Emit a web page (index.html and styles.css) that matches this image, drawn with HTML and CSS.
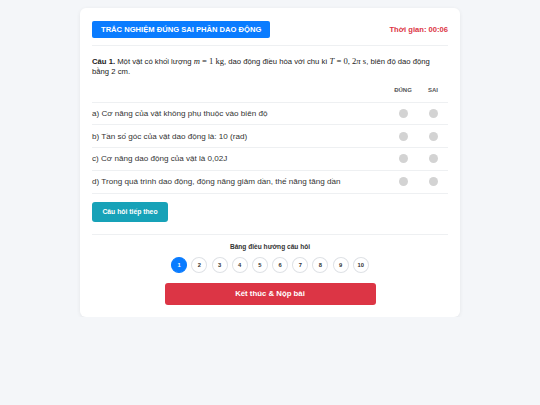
FILE: index.html
```html
<!DOCTYPE html>
<html lang="vi">
<head>
<meta charset="utf-8">
<title>Trắc nghiệm đúng sai</title>
<link rel="stylesheet" href="styles.css">
</head>
<body>
<div class="page">
  <div class="card">
    <div class="header">
      <div class="title">TRẮC NGHIỆM ĐÚNG SAI PHẦN DAO ĐỘNG</div>
      <div class="timer">Thời gian: 00:06</div>
    </div>
    <p class="question"><b class="label">Câu 1.</b> <span>Một vật có khối lượng</span> <span class="math"><i>m</i> = 1 kg</span><span>, dao động điều hòa với chu kì</span> <span class="math"><i>T</i> = 0, 2<i>π</i> s</span><span>, biên độ dao động</span> <span>bằng 2 cm.</span></p>
    <div class="table">
      <div class="row head">
        <div class="cell-text"></div>
        <div class="cell-col">ĐÚNG</div>
        <div class="cell-col">SAI</div>
      </div>
      <div class="row">
        <div class="cell-text">a) Cơ năng của vật không phụ thuộc vào biên độ</div>
        <div class="cell-col"><span class="radio"></span></div>
        <div class="cell-col"><span class="radio"></span></div>
      </div>
      <div class="row">
        <div class="cell-text">b) Tần số góc của vật dao động là: 10 (rad)</div>
        <div class="cell-col"><span class="radio"></span></div>
        <div class="cell-col"><span class="radio"></span></div>
      </div>
      <div class="row">
        <div class="cell-text">c) Cơ năng dao động của vật là 0,02J</div>
        <div class="cell-col"><span class="radio"></span></div>
        <div class="cell-col"><span class="radio"></span></div>
      </div>
      <div class="row">
        <div class="cell-text">d) Trong quá trình dao động, động năng giảm dần, thế năng tăng dần</div>
        <div class="cell-col"><span class="radio"></span></div>
        <div class="cell-col"><span class="radio"></span></div>
      </div>
    </div>
    <button class="next">Câu hỏi tiếp theo</button>
    <div class="nav">
      <div class="nav-title">Bảng điều hướng câu hỏi</div>
      <div class="nav-list">
        <span class="num active">1</span>
        <span class="num">2</span>
        <span class="num">3</span>
        <span class="num">4</span>
        <span class="num">5</span>
        <span class="num">6</span>
        <span class="num">7</span>
        <span class="num">8</span>
        <span class="num">9</span>
        <span class="num">10</span>
      </div>
      <button class="submit">Kết thúc &amp; Nộp bài</button>
    </div>
  </div>
</div>
</body>
</html>
```
FILE: styles.css
```css
html, body {
  margin: 0;
  padding: 0;
  background: #f4f6f9;
  font-family: "Liberation Sans", Arial, sans-serif;
  color: #333;
}
.page {
  padding-top: 8px;
}
.card {
  width: 356px;
  margin: 0 auto;
  background: #fff;
  border-radius: 6px;
  padding: 12px;
  box-shadow: 0 1px 4px rgba(0, 0, 0, 0.07);
}
.header {
  display: flex;
  justify-content: space-between;
  align-items: center;
  padding: 1px 0 7px;
  border-bottom: 1px solid #eef0f2;
}
.title {
  background: #0a7cff;
  color: #fff;
  font-weight: bold;
  font-size: 7.6px;
  height: 17px;
  line-height: 17px;
  padding: 0 9px;
  border-radius: 2px;
}
.timer {
  color: #dc3545;
  font-weight: bold;
  font-size: 7.6px;
}
.question {
  margin: 10.5px 0 0;
  font-size: 7.7px;
  line-height: 10.5px;
  color: #222;
}
.math {
  font-family: "Liberation Serif", "Times New Roman", serif;
  font-size: 8.6px;
  line-height: 8px;
}
.table {
  margin-top: 5px;
}
.row {
  display: grid;
  grid-template-columns: 1fr 30px 30px;
  align-items: center;
  height: 21.8px;
  border-bottom: 1px solid #eef0f2;
  font-size: 8.1px;
}
.row.head {
  height: 15px;
  padding-bottom: 4px;
  font-size: 6px;
  font-weight: bold;
  color: #555;
}
.cell-col {
  display: flex;
  justify-content: center;
  align-items: center;
}
.radio {
  width: 9px;
  height: 9px;
  border-radius: 50%;
  background: #d3d3d3;
}
.next {
  margin-top: 8.5px;
  background: #17a2b8;
  color: #fff;
  border: none;
  border-radius: 3px;
  font-family: inherit;
  font-weight: bold;
  font-size: 6.8px;
  height: 19.4px;
  width: 76px;
  padding: 0;
  display: block;
}
.nav {
  margin-top: 12.5px;
  border-top: 1px solid #eef0f2;
  padding-top: 8px;
  display: flex;
  flex-direction: column;
  align-items: center;
}
.nav-title {
  font-size: 6.6px;
  font-weight: bold;
  color: #333;
}
.nav-list {
  display: flex;
  gap: 4.2px;
  margin-top: 7px;
}
.num {
  width: 14px;
  height: 13.6px;
  border: 1px solid #dfe2e6;
  border-radius: 50%;
  display: flex;
  align-items: center;
  justify-content: center;
  font-size: 5.8px;
  font-weight: bold;
  color: #333;
}
.num.active {
  background: #0a7cff;
  border-color: #0a7cff;
  color: #fff;
}
.submit {
  margin-top: 10.5px;
  width: 211px;
  height: 21.4px;
  background: #dc3545;
  color: #fff;
  border: none;
  border-radius: 3px;
  font-family: inherit;
  font-weight: bold;
  font-size: 7.8px;
  padding: 0;
}
```
